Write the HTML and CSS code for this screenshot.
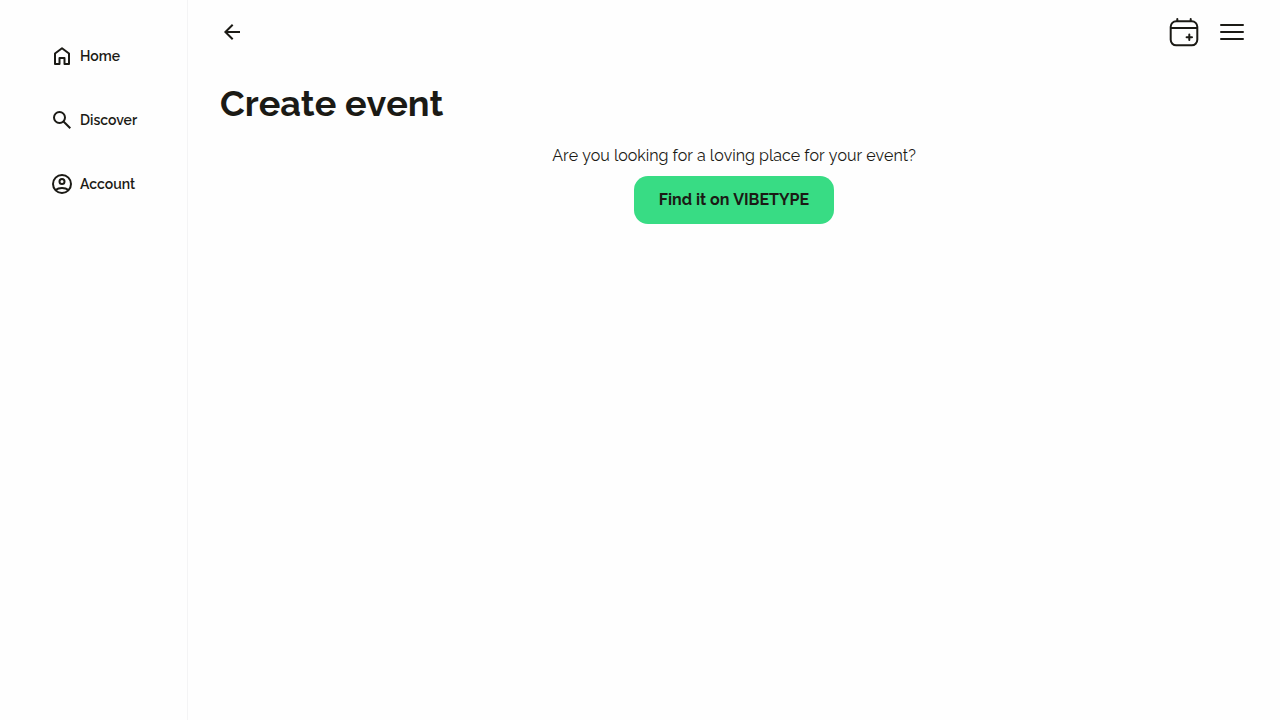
FILE: index.html
```html
<!DOCTYPE html>
<html lang="en">
<head>
<meta charset="utf-8">
<meta name="viewport" content="width=device-width, initial-scale=1">
<title>Create event</title>
<link rel="stylesheet" href="styles.css">
</head>
<body>
<div class="app">
  <nav class="sidebar" aria-label="Main">
    <a class="nav-link" href="#home">
      <svg class="icon" viewBox="0 0 24 24" fill="none" stroke="currentColor" stroke-width="2" stroke-linejoin="round" aria-hidden="true"><path d="M5 20V9.500l7-5.300 7 5.300V20h-4.500v-6h-5v6z"/></svg>
      Home
    </a>
    <a class="nav-link" href="#discover">
      <svg class="icon" viewBox="0 0 24 24" fill="none" stroke="currentColor" stroke-width="2" aria-hidden="true"><circle cx="9.500" cy="9.500" r="5.500"/><path d="M13.500 13.500l6.800 6.800"/></svg>
      Discover
    </a>
    <a class="nav-link" href="#account">
      <svg class="icon" viewBox="0 0 24 24" fill="none" stroke="currentColor" stroke-width="2" aria-hidden="true"><circle cx="12" cy="12" r="9"/><circle cx="12" cy="9.500" r="2.500"/><path d="M5.500 18C9 15.300 15 15.300 18.500 18"/></svg>
      Account
    </a>
  </nav>
  <div class="page">
    <header class="topbar">
      <button class="icon-button" type="button" aria-label="Back">
        <svg class="icon" viewBox="0 0 24 24" fill="none" stroke="currentColor" stroke-width="2" aria-hidden="true"><path d="M20 12H5.500M12.700 4.700L5.400 12l7.300 7.300"/></svg>
      </button>
      <div class="actions">
        <button class="icon-button" type="button" aria-label="Create event">
          <svg class="icon-large" viewBox="0 0 32 32" fill="none" stroke="currentColor" stroke-width="2" stroke-linecap="round" aria-hidden="true"><rect x="2.700" y="5.300" width="26.600" height="24" rx="5.500"/><path d="M3 12h26M9.300 3v2M22.700 3v2M18.600 21.300h5.400M21.300 18.600v5.400"/></svg>
        </button>
        <button class="icon-button" type="button" aria-label="Menu">
          <svg class="icon-large" viewBox="0 0 32 32" fill="none" stroke="currentColor" stroke-width="2" stroke-linecap="round" aria-hidden="true"><path d="M5 9h22M5 16h22M5 23h22"/></svg>
        </button>
      </div>
    </header>
    <main class="content">
      <h1 class="title">Create event</h1>
      <div class="prompt">
        <p class="question">Are you looking for a loving place for your event?</p>
        <a class="cta" href="#vibetype">Find it on VIBETYPE</a>
      </div>
    </main>
  </div>
</div>
</body>
</html>
```
FILE: styles.css
```css
* {
  box-sizing: border-box;
}

body {
  margin: 0;
  background: #fefefe;
  color: #1b1a15;
  font-family: Raleway, Lato, "Open Sans", sans-serif;
  font-size: 16px;
  line-height: 24px;
}

.app {
  display: flex;
  min-height: 100vh;
}

.sidebar {
  flex: 0 0 188px;
  display: flex;
  flex-direction: column;
  gap: 40px;
  padding: 44px 0 0 50px;
  border-right: 1px solid #f4f4f5;
}

.nav-link {
  display: flex;
  align-items: center;
  gap: 6px;
  color: inherit;
  font-size: 14px;
  font-weight: 600;
  text-decoration: none;
}

.icon {
  display: block;
  width: 24px;
  height: 24px;
}

.icon-large {
  display: block;
  width: 32px;
  height: 32px;
}

.page {
  flex: 1;
  padding: 0 32px;
}

.topbar {
  display: flex;
  align-items: center;
  justify-content: space-between;
  height: 64px;
}

.actions {
  display: flex;
  gap: 16px;
}

.icon-button {
  padding: 0;
  border: 0;
  background: none;
  color: inherit;
  cursor: pointer;
}

.content {
  padding-top: 16px;
  font-kerning: none;
}

.title {
  margin: 0 0 18px;
  font-size: 36px;
  font-weight: 700;
  line-height: 46px;
}

.prompt {
  display: flex;
  flex-direction: column;
  align-items: center;
  gap: 8px;
}

.question {
  margin: 0;
}

.cta {
  min-width: 200px;
  padding: 12px 24px;
  border-radius: 14px;
  background: #38dc84;
  color: inherit;
  font-weight: 700;
  text-align: center;
  text-decoration: none;
}
```
